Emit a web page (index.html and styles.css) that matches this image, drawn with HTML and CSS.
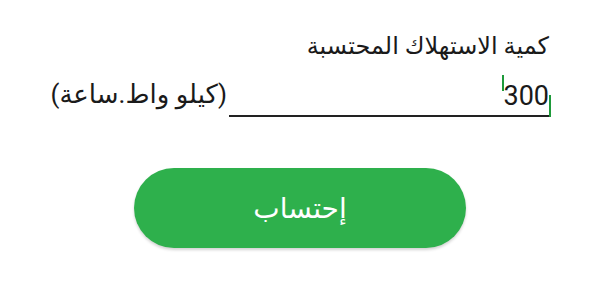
FILE: index.html
```html
<!DOCTYPE html>
<html lang="ar" dir="rtl">
<head>
<meta charset="utf-8">
<link rel="stylesheet" href="styles.css">
</head>
<body>
<main class="form">
  <div class="label">كمية الاستهلاك المحتسبة</div>
  <div class="row">
    <div class="field">
      <span class="value">300<span class="caret-start"></span><span class="caret-end"></span></span>
    </div>
    <div class="unit">(كيلو واط.ساعة)</div>
  </div>
  <div class="actions">
    <button class="btn">إحتساب</button>
  </div>
</main>
</body>
</html>
```
FILE: styles.css
```css
html, body {
  margin: 0;
  padding: 0;
  background: #ffffff;
}
body {
  width: 600px;
  height: 300px;
  overflow: hidden;
  font-family: Roboto, "DejaVu Sans", sans-serif;
  color: #1a1a1a;
}
.form {
  display: flex;
  flex-direction: column;
  padding: 30px 51px 0 0;
}
.label {
  font-size: 24px;
  line-height: 32px;
  height: 32px;
}
.row {
  display: flex;
  align-items: flex-end;
  margin-top: 9px;
}
.field {
  width: 320px;
  height: 44px;
  border-bottom: 2px solid #222;
  display: flex;
  align-items: center;
}
.value {
  position: relative;
  font-size: 27px;
  direction: ltr;
  line-height: 30px;
  margin-top: 6px;
}
.caret-start {
  position: absolute;
  left: -1px;
  top: -6px;
  width: 2px;
  height: 16px;
  background: #1e9a3a;
}
.caret-end {
  position: absolute;
  right: -2px;
  top: 14px;
  width: 2px;
  height: 22px;
  background: #1e9a3a;
}
.unit {
  font-size: 26px;
  line-height: 34px;
  margin: 0 2px 6px 0;
  white-space: nowrap;
}
.actions {
  display: flex;
  justify-content: center;
  margin-top: 51px;
  padding-left: 51px;
}
.btn {
  width: 332px;
  height: 80px;
  border: none;
  border-radius: 40px;
  background: #2eb04c;
  color: #ffffff;
  font-family: Roboto, "DejaVu Sans", sans-serif;
  font-size: 28px;
  font-weight: 500;
  box-shadow: 0 2px 3px rgba(0,0,0,0.18);
  padding: 0;
}
```
